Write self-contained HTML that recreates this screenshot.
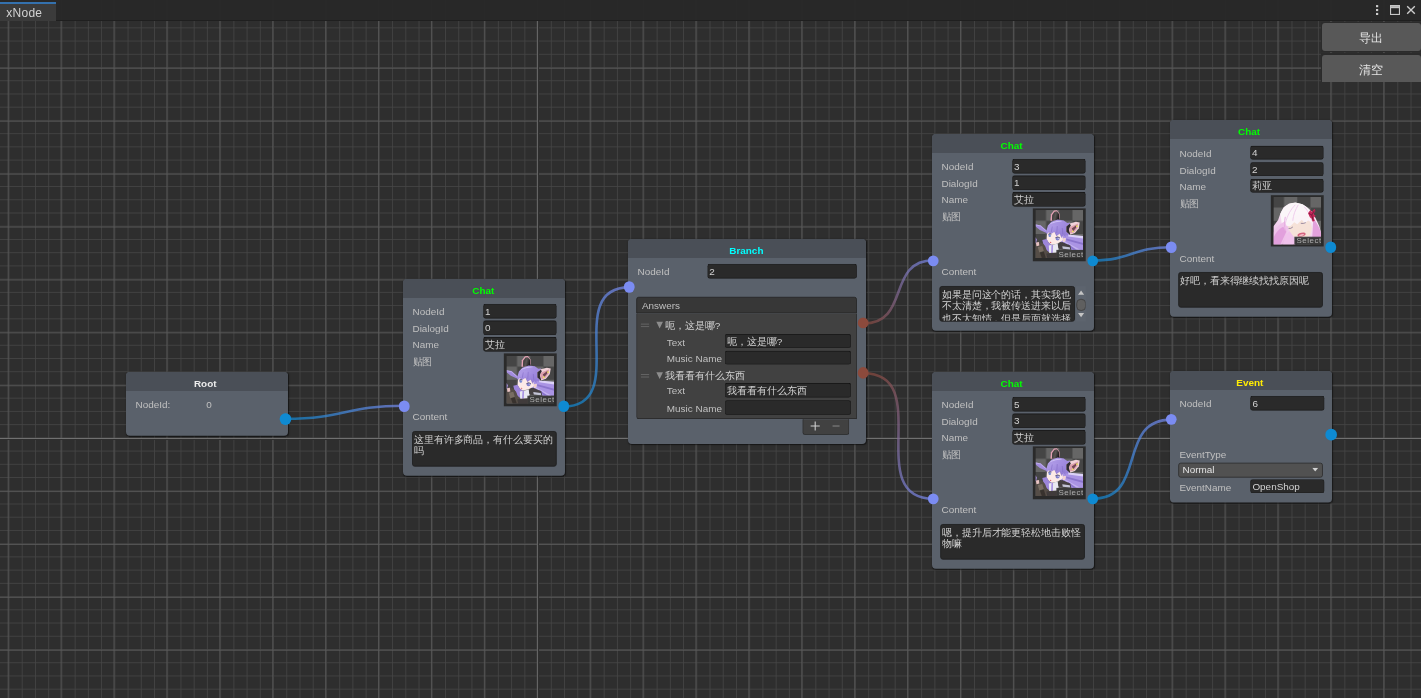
<!DOCTYPE html>
<html lang="zh"><head><meta charset="utf-8"><title>xNode</title>
<style>
html,body{margin:0;padding:0;background:#2e2e2e}
body{width:1421px;height:698px;overflow:hidden;position:relative;font-family:"Liberation Sans",sans-serif;font-size:12px;color:#c0c0c0}
#grid,#wires{position:absolute;left:0;top:0}
#top{position:absolute;left:0;top:0;width:1421px;height:21px;background:rgba(40,40,40,.99);will-change:transform}
#tab{position:absolute;left:0;top:2px;width:56px;height:19px;background:rgba(60,60,60,.99);border-top:2px solid #3471ae;box-sizing:border-box;color:#d2d2d2}
#tab span{position:absolute;left:6.3px;top:2px;line-height:14px;font-size:12px;letter-spacing:.25px}
.bpanel{position:absolute;left:1321px;width:100px;background:#2b2b2b}
.btn{position:absolute;left:1322px;width:98.5px;height:27.7px;background:#585858;border-radius:3px;color:#e4e4e4;text-align:center;line-height:30.5px;font-size:12px;will-change:transform}
.node{position:absolute;transform:scale(0.826446);transform-origin:0 0;background:#5a616b;border-radius:4.8px;box-shadow:1px 1px 1.5px rgba(0,0,0,.55);width:196px}
.hd{position:absolute;left:0;top:0;right:0;height:22.5px;background:#4a4f57;border-radius:4.8px 4.8px 0 0;text-align:center;font-weight:bold}
.hd span{display:block;position:relative;top:6.9px;line-height:14px;left:var(--tx,-1.5px)}
.lb,.tf{margin-top:var(--dy,0)}
.lb{position:absolute;left:11.5px;height:18px;line-height:21px;white-space:nowrap}
.tf{position:absolute;left:96.5px;width:89.5px;height:17.7px;box-sizing:border-box;background:#2a2a2a;border:1px solid #1d1d1d;border-top-color:#131313;border-radius:3px;color:#d2d2d2;line-height:17.5px;padding-left:1.7px;white-space:nowrap;overflow:hidden}
.ta{position:absolute;left:9.5px;width:175.3px;top:183.6px;height:43px;box-sizing:border-box;background:#2a2a2a;border:1px solid #1d1d1d;border-radius:3px;color:#d2d2d2;line-height:14.7px;padding:2.2px 0 0 1.6px;overflow:hidden;word-break:break-all}
.port{position:absolute;width:13.4px;height:13.4px;border-radius:50%;margin:-6.7px 0 0 -6.7px}
.pi{background:#7b8cf2;left:1.5px}
.po{background:#0e8ad2;left:194.3px}
.pr{background:#8c4a3c}
.th{position:absolute;left:122px;top:89.5px;width:64px;height:64px;background:#2a2a2a}
.th svg{position:absolute;left:3.3px;top:var(--io,3.3px)}
</style></head><body>
<svg id="grid" width="1421" height="698" viewBox="0 0 1421 698" fill="none">
<path d="M9.01 0V698M22.23 0V698M35.46 0V698M48.69 0V698M61.91 0V698M75.14 0V698M88.37 0V698M101.59 0V698M114.82 0V698M128.05 0V698M141.27 0V698M154.50 0V698M167.73 0V698M180.95 0V698M194.18 0V698M207.40 0V698M220.63 0V698M233.86 0V698M247.08 0V698M260.31 0V698M273.54 0V698M286.76 0V698M299.99 0V698M313.22 0V698M326.44 0V698M339.67 0V698M352.90 0V698M366.12 0V698M379.35 0V698M392.58 0V698M405.80 0V698M419.03 0V698M432.26 0V698M445.48 0V698M458.71 0V698M471.93 0V698M485.16 0V698M498.39 0V698M511.61 0V698M524.84 0V698M538.07 0V698M551.29 0V698M564.52 0V698M577.75 0V698M590.97 0V698M604.20 0V698M617.43 0V698M630.65 0V698M643.88 0V698M657.11 0V698M670.33 0V698M683.56 0V698M696.79 0V698M710.01 0V698M723.24 0V698M736.46 0V698M749.69 0V698M762.92 0V698M776.14 0V698M789.37 0V698M802.60 0V698M815.82 0V698M829.05 0V698M842.28 0V698M855.50 0V698M868.73 0V698M881.96 0V698M895.18 0V698M908.41 0V698M921.64 0V698M934.86 0V698M948.09 0V698M961.32 0V698M974.54 0V698M987.77 0V698M1000.99 0V698M1014.22 0V698M1027.45 0V698M1040.67 0V698M1053.90 0V698M1067.13 0V698M1080.35 0V698M1093.58 0V698M1106.81 0V698M1120.03 0V698M1133.26 0V698M1146.49 0V698M1159.71 0V698M1172.94 0V698M1186.17 0V698M1199.39 0V698M1212.62 0V698M1225.85 0V698M1239.07 0V698M1252.30 0V698M1265.52 0V698M1278.75 0V698M1291.98 0V698M1305.20 0V698M1318.43 0V698M1331.66 0V698M1344.88 0V698M1358.11 0V698M1371.34 0V698M1384.56 0V698M1397.79 0V698M1411.02 0V698M0 67.52H1421M0 54.29H1421M0 41.06H1421M0 27.84H1421M0 120.42H1421M0 107.20H1421M0 93.97H1421M0 80.74H1421M0 173.33H1421M0 160.10H1421M0 146.88H1421M0 133.65H1421M0 226.23H1421M0 213.01H1421M0 199.78H1421M0 186.56H1421M0 279.14H1421M0 265.91H1421M0 252.69H1421M0 239.46H1421M0 332.05H1421M0 318.82H1421M0 305.59H1421M0 292.37H1421M0 384.95H1421M0 371.73H1421M0 358.50H1421M0 345.27H1421M0 437.86H1421M0 424.63H1421M0 411.41H1421M0 398.18H1421M0 490.76H1421M0 477.54H1421M0 464.31H1421M0 451.09H1421M0 543.67H1421M0 530.44H1421M0 517.22H1421M0 503.99H1421M0 596.58H1421M0 583.35H1421M0 570.12H1421M0 556.90H1421M0 649.48H1421M0 636.26H1421M0 623.03H1421M0 609.80H1421M0 689.16H1421M0 675.94H1421M0 662.71H1421" stroke="#464646" stroke-width="0.827"/>
<path d="M8.18 0V698M61.09 0V698M113.99 0V698M166.90 0V698M219.80 0V698M272.71 0V698M325.62 0V698M378.52 0V698M431.43 0V698M484.33 0V698M537.24 0V698M590.15 0V698M643.05 0V698M695.96 0V698M748.86 0V698M801.77 0V698M854.68 0V698M907.58 0V698M960.49 0V698M1013.39 0V698M1066.30 0V698M1119.21 0V698M1172.11 0V698M1225.02 0V698M1277.92 0V698M1330.83 0V698M1383.74 0V698M0 68.34H1421M0 121.25H1421M0 174.16H1421M0 227.06H1421M0 279.97H1421M0 332.87H1421M0 385.78H1421M0 438.69H1421M0 491.59H1421M0 544.50H1421M0 597.40H1421M0 650.31H1421" stroke="#5b5b5b" stroke-width="0.827"/>
<path d="M0 439.5H1421M538.5 21V698" stroke="#2e2e2e" stroke-width="1" shape-rendering="crispEdges"/>
<path d="M0 438.5H1421" stroke="#707070" stroke-width="1" shape-rendering="crispEdges"/>
<path d="M537.5 21V698" stroke="#646464" stroke-width="1" shape-rendering="crispEdges"/>

</svg>
<div id="top"><div style="position:absolute;left:56px;top:20px;width:1365px;height:1px;background:#1f1f1f"></div><div id="tab"><span>xNode</span></div>
<svg style="position:absolute;left:1370px;top:0" width="51" height="21" viewBox="1370 0 51 21">
<g fill="#cdcdcd"><rect x="1376" y="5.1" width="2.2" height="2.1"/><rect x="1376" y="9" width="2.2" height="2.1"/><rect x="1376" y="12.9" width="2.2" height="2.1"/></g>
<rect x="1390.55" y="5.55" width="8.9" height="8.9" fill="none" stroke="#c8c8c8" stroke-width="1.1"/><rect x="1390" y="5" width="10" height="3.2" fill="#c8c8c8"/><rect x="1391" y="6" width="8" height="1" fill="#b4b4b4"/>
<path d="M1407.2 6.2L1414.8 13.8M1414.8 6.2L1407.2 13.8" stroke="#cdcdcd" stroke-width="1.35" fill="none"/>
</svg>
</div>
<div class="bpanel" style="top:22px;height:30.3px"></div>
<div class="bpanel" style="top:53.4px;height:28.8px"></div>
<div class="btn" style="top:23px">导出</div>
<div class="btn" style="top:55px;height:27px;border-radius:3px 3px 0 0">清空</div>

<svg width="0" height="0" style="position:absolute">
<defs>
<pattern id="chk" x="-2.48" y="-2.48" width="26.48" height="26.48" patternUnits="userSpaceOnUse"><rect width="26.48" height="26.48" fill="#454545"/><rect x="13.24" width="13.24" height="13.24" fill="#666"/><rect y="13.24" width="13.24" height="13.24" fill="#666"/></pattern>
<linearGradient id="lg" x1="0.6" y1="0" x2="0.1" y2="1"><stop offset="0" stop-color="#fbf4f8"/><stop offset=".45" stop-color="#f4dbf0"/><stop offset="1" stop-color="#ebb4e5"/></linearGradient>
<linearGradient id="eg" x1="0" y1="0" x2="1" y2="0.3"><stop offset="0" stop-color="#2f2c2e"/><stop offset=".55" stop-color="#5a5654"/><stop offset="1" stop-color="#1f1d1e"/></linearGradient>
<linearGradient id="hg" x1="0" y1="0" x2="1" y2="1"><stop offset="0" stop-color="#b6a3eb"/><stop offset=".5" stop-color="#a08ade"/><stop offset="1" stop-color="#8d76d0"/></linearGradient>
<filter id="bl" x="-5%" y="-5%" width="110%" height="110%"><feGaussianBlur stdDeviation="0.35"/></filter>
<symbol id="aila" viewBox="0 0 48 48">
<rect width="48" height="48" fill="url(#chk)"/>
<g filter="url(#bl)">
<path d="M0 14.4L5.3 15.2L11.5 20.6L10.7 22.7L4.5 20L0.6 16.7Z" fill="#a28bdd"/>
<path d="M0.6 14.9L5.2 16L10.4 20.6" stroke="#cbbcf3" stroke-width="0.7" fill="none"/>
<path d="M15.2 10.8L15.6 4.5L18.7 0.4L21.7 0.2L24.2 3.6L24.5 7.9L23.4 10.8Z" fill="#e6a3b6"/>
<path d="M16.6 10.8L16.9 5L19.2 1.7L21.6 1.3L23.8 4L24.2 10.8Z" fill="url(#eg)"/>
<path d="M10.9 21.5L12.6 15.6L16.1 11.8L22.5 9.6L28.5 10.5L32 13L34.9 12.6L33.6 15.2L34.4 20L34 28L29 34L12 25Z" fill="url(#hg)"/>
<path d="M14 14.5C17 11.5 22 10.2 27 11.2C22.5 11.6 18 12.6 14 14.5Z" fill="#d2c6f6"/>
<path d="M28 25L36 26L48 27.5V40H36.7L28.5 36.5L26.8 31.1Z" fill="#aa94e4"/>
<path d="M33 24.6L48 26V28.6L33 26.4Z" fill="#dcd2f8"/>
<path d="M31 28.5L48 33V35L31 30.2Z" fill="#8b74cd"/>
<path d="M30 31.5L45 39.8H42L29.5 33.5Z" fill="#c2b1ef"/>
<path d="M33 34L41 39.8H38L32 35.5Z" fill="#8b74cd"/>
<path d="M31.1 16.5L34.6 13.5L40.6 11.8L44.5 12.6L43.6 18.2L39.7 23L34.6 24.7L31.1 21.7Z" fill="#f0d2d8"/>
<path d="M31.1 16.5L34.4 13.8L35.6 15.2L33.6 19.5L35 24.4L34.6 24.7L31.1 21.7Z" fill="#2f2b30"/>
<path d="M34.6 17L42.9 13.4L42.4 17.8L39 22.2L35.2 23.4L34 20Z" fill="#dda0ac"/>
<path d="M36.5 18.6L41.4 15L40.8 17.8L38 21.2Z" fill="#6f4652"/>
<circle cx="41.8" cy="16.2" r="0.85" fill="#ecea55"/><circle cx="37.6" cy="21.3" r="0.85" fill="#ecea55"/>
<path d="M11.8 23L11.3 29.4L13.5 32.8L16.1 34.7L21.7 33.8L26.8 31.1L28.6 28.3L30.4 28L30 31.6L27.5 32L27.7 24.2L20 20.5Z" fill="#fceae7"/>
<path d="M27.9 28.3L30.3 28.1L29.9 31.6L27.8 31.8Z" fill="#f2d0cc"/>
<path d="M10.9 22.6C12 17.6 16.5 15 22 15.4C28 16 31 20.6 30.2 27.6L28.3 24.8L26.6 27.8L24.6 23.6L21.4 26L19.4 21.8L16 23.8L13.6 21.8L11.8 24.2Z" fill="url(#hg)"/>
<path d="M19.4 21.8L21.4 26M24.6 23.6L26.6 27.8M13.6 21.8L16 23.8M17 16.5L16 22M22 16L21.5 23M27 18L27.5 24" stroke="#8068c4" stroke-width="0.55" fill="none"/>
<ellipse cx="14.5" cy="25.4" rx="1.3" ry="1.65" fill="#7487d2"/><path d="M13 24.3Q14.5 23 16 24.2" stroke="#3b3558" stroke-width="0.75" fill="none"/><circle cx="14.9" cy="24.9" r="0.45" fill="#fff"/>
<ellipse cx="22.3" cy="28.7" rx="2" ry="1.7" fill="#8080cd"/><path d="M20.1 27.7Q22.4 26.1 24.6 27.8" stroke="#3b3558" stroke-width="0.75" fill="none"/><circle cx="22.9" cy="28.2" r="0.5" fill="#fff"/>
<ellipse cx="15.3" cy="32.4" rx="0.75" ry="0.55" fill="#d9636d"/>
<path d="M7 30L11.3 29L13.5 32.8L16.1 34.7L17.5 36L16 44L11 40L8 34Z" fill="#9c85da"/>
<path d="M13.5 35.6L22.8 33.6L24 38L21.5 43.5L14 43.5Z" fill="#e9e9f2"/>
<path d="M16.2 34.8L17.8 35L17.5 43L15.8 43Z" fill="#a892e2"/>
<path d="M22.5 34L27 32L35 35.5L36 39.8H28L23 38.5Z" fill="#454042"/>
<path d="M27 36.2L34.5 37.2L35 39.5L27.5 38.8Z" fill="#c3c4d6"/>
<path d="M0 33.5L3 31.5L7 33L9.8 36L11.5 40.5L14 43L22 42.5L22 48H0Z" fill="#554d47"/>
<path d="M0.6 32.4L3.6 32L4 35.6L1.2 36.2Z" fill="#e8c3c3"/>
<path d="M2.5 37L7 36L8.5 41L4 42.5Z" fill="#786d63"/>
<path d="M4.5 42.5L8.5 41.5L10.5 48H6.5Z" fill="#38332f"/>
<path d="M11 43.5L21 43L21 48H12Z" fill="#3f3a3a"/>
<path d="M0 27L1.6 29.5L0.8 33L0 33.5Z" fill="#a892e2"/>
</g>
<rect x="21.1" y="39.9" width="26.9" height="8.1" fill="#383838" opacity=".93"/>
<text x="23.3" y="46.7" font-size="8" letter-spacing="0.48" fill="#aeaeae" font-family="Liberation Sans, sans-serif">Select</text>
</symbol>
<symbol id="liya" viewBox="0 0 48 48">
<rect width="48" height="48" fill="url(#chk)"/>
<g filter="url(#bl)">
<path d="M0 29.8L4.8 23.1L7.1 16.7L10.3 10.3L15.8 6.6L22.2 5.7L29.5 7.5L34.1 10.7L38.7 14.9L42.4 21.3L46.1 29.5L48 36.9V41H22V48H0Z" fill="url(#lg)"/>
<path d="M7.1 17C10 9.5 16 6.2 22.2 5.9C30 6.5 37 11.5 40.5 19.5L42 27L36 23L24 22L14 28L9 31Z" fill="#fbf6f9"/>
<path d="M0 36C3 30 7 27 11 25L15 31L12 40L8 48H0Z" fill="#efc2ea"/>
<path d="M0 42C2 36 6 32 10 30L13 35L7 48H0Z" fill="#e2a0dd"/>
<path d="M10 48C11 41 14 36 17 34L21 40L20 48Z" fill="#f0c2ec"/>
<path d="M40 22C43 25 46 30 48 36.5V41H39Z" fill="#e3a2dc"/>
<path d="M13.9 27.7L21.3 23.1L31.4 22.2L36.9 25L38.7 31.4L36.9 38.7L33 41H21.3L16.7 35Z" fill="#f6e2d8"/>
<path d="M13 29C14 23 20 18.5 28 17.5C34 17.5 38 21 39.5 26L35 23.5L31.5 26.5L28.5 23L24 27.5L21 25.5L17 29.5Z" fill="#fbf4f8"/>
<path d="M22 8C18 12 14 18 12 27M25 8C22 13 20 18 19.5 24M31 10C34 13 37 18 38.5 24" stroke="#ecc3ea" stroke-width="0.8" fill="none"/>
<path d="M12 20C11 25 11 30 12 34" stroke="#e6aee2" stroke-width="1" fill="none"/>
<path d="M15.3 31.6Q17.6 32.2 19.6 30.1" stroke="#8a7a94" stroke-width="0.85" fill="none"/>
<path d="M27.5 26.5Q30.2 27.1 32.5 25.8" stroke="#8a7a94" stroke-width="0.85" fill="none"/>
<ellipse cx="28.3" cy="37.8" rx="4.2" ry="1.9" transform="rotate(-13 28.3 37.8)" fill="#d6647f"/>
<ellipse cx="28.3" cy="38.3" rx="2.6" ry="0.9" transform="rotate(-13 28.3 38.3)" fill="#f3bcc6"/>
<path d="M34.8 16.5L37.2 13L38.6 15.2L41.2 12L42.2 14.2L40.2 17.2L42.4 19L40.6 21L41.6 24L39.4 25L38.2 21.6L36.6 20.4Z" fill="#c7265a"/>
<path d="M35.6 16.6L38.6 18.2L39.8 23.6M38.6 18.2L41 14" stroke="#5e1a31" stroke-width="0.7" fill="none"/>
</g>
<rect x="21.1" y="39.9" width="26.9" height="8.1" fill="#383838" opacity=".93"/>
<text x="23.3" y="46.7" font-size="8" letter-spacing="0.48" fill="#aeaeae" font-family="Liberation Sans, sans-serif">Select</text>
</symbol>
</defs></svg>

<svg id="wires" width="1421" height="698" viewBox="0 0 1421 698">
<defs><linearGradient id="g0" gradientUnits="userSpaceOnUse" x1="285.5" y1="418.7" x2="404.5" y2="405.8"><stop offset="0" stop-color="#0e8ad2"/><stop offset="1" stop-color="#7b8cf2"/></linearGradient><linearGradient id="g1" gradientUnits="userSpaceOnUse" x1="563.7" y1="406.5" x2="629.3" y2="287.4"><stop offset="0" stop-color="#0e8ad2"/><stop offset="1" stop-color="#7b8cf2"/></linearGradient><linearGradient id="g2" gradientUnits="userSpaceOnUse" x1="863.5" y1="323.5" x2="933.4" y2="260.4"><stop offset="0" stop-color="#8c4a3c"/><stop offset="1" stop-color="#7b8cf2"/></linearGradient><linearGradient id="g3" gradientUnits="userSpaceOnUse" x1="863.5" y1="373.3" x2="933.4" y2="498.7"><stop offset="0" stop-color="#8c4a3c"/><stop offset="1" stop-color="#7b8cf2"/></linearGradient><linearGradient id="g4" gradientUnits="userSpaceOnUse" x1="1092.5" y1="260.4" x2="1171.5" y2="247.3"><stop offset="0" stop-color="#0e8ad2"/><stop offset="1" stop-color="#7b8cf2"/></linearGradient><linearGradient id="g5" gradientUnits="userSpaceOnUse" x1="1092.5" y1="498.7" x2="1171.5" y2="419.6"><stop offset="0" stop-color="#0e8ad2"/><stop offset="1" stop-color="#7b8cf2"/></linearGradient></defs>
<g fill="none" stroke-width="2.6" opacity="0.7" stroke-linecap="round"><path d="M285.5 418.7C345.3 418.7 344.7 405.8 404.5 405.8" stroke="url(#g0)"/>
<path d="M563.7 406.5C631.7 406.5 561.3 287.4 629.3 287.4" stroke="url(#g1)"/>
<path d="M863.5 323.5C910.6 323.5 886.3 260.4 933.4 260.4" stroke="url(#g2)"/>
<path d="M863.5 373.3C935.3 373.3 861.6 498.7 933.4 498.7" stroke="url(#g3)"/>
<path d="M1092.5 260.4C1132.5 260.4 1131.5 247.3 1171.5 247.3" stroke="url(#g4)"/>
<path d="M1092.5 498.7C1148.4 498.7 1115.6 419.6 1171.5 419.6" stroke="url(#g5)"/></g>
</svg>

<!-- Root -->
<div class="node" style="left:126.2px;top:372.4px;height:76.6px;--tx:-2.1px">
<div class="hd" style="color:#ececec"><span>Root</span></div>
<div class="lb" style="top:30px">NodeId:</div>
<div class="lb" style="top:30px;left:97px">0</div>
<div class="port po" style="top:56.8px;left:192.8px"></div>
</div>

<!-- Chat 1 -->
<div class="node" style="left:403.2px;top:279.3px;height:238px;--tx:-0.8px">
<div class="hd" style="color:#00ff00"><span>Chat</span></div>
<div class="lb" style="top:30px">NodeId</div><div class="tf" style="top:30px">1</div>
<div class="lb" style="top:50px">DialogId</div><div class="tf" style="top:50px">0</div>
<div class="lb" style="top:70px">Name</div><div class="tf" style="top:70px">艾拉</div>
<div class="lb" style="top:90px">贴图</div>
<div class="th"><svg width="58" height="58"><use href="#aila"/></svg></div>
<div class="port pi" style="top:153.8px"></div><div class="port po" style="top:153.8px"></div>
<div class="lb" style="top:157px">Content</div>
<div class="ta" style="left:10.6px">这里有许多商品，有什么要买的吗</div>
</div>

<!-- Branch -->
<div class="node" style="left:628.3px;top:238.9px;width:288px;height:247.5px;--tx:-0.8px">
<div class="hd" style="color:#00ffff"><span>Branch</span></div>
<div class="lb" style="top:30px">NodeId</div><div class="tf" style="top:30px;left:95.5px;width:181px">2</div>
<div class="port pi" style="top:58px"></div>
<div style="position:absolute;left:9.9px;top:69.7px;width:266.7px;height:20px;box-sizing:border-box;background:rgba(55,55,55,.99);border:1px solid #242424;border-radius:3px 3px 0 0"><span style="position:absolute;left:6px;top:1px;line-height:18px">Answers</span></div>
<div style="position:absolute;left:9.9px;top:89.7px;width:266.7px;height:127.9px;box-sizing:border-box;background:rgba(65,65,65,.99);border:1px solid #242424;border-top:none;border-radius:0 0 0 3px"></div>
<div style="position:absolute;left:211px;top:217.6px;width:57px;height:19.6px;box-sizing:border-box;background:rgba(65,65,65,.99);border:1px solid #242424;border-top:none;border-radius:0 0 3px 3px"></div>
<svg style="position:absolute;left:0;top:0" width="288" height="247" viewBox="0 0 288 247">
<g stroke="#6c6c6c" stroke-width="1"><path d="M15.6 103H25.6M15.6 106H25.6M15.6 164H25.6M15.6 167H25.6"/></g>
<path d="M34.3 100.2H42.3L38.3 108.2Z M34.3 161.3H42.3L38.3 169.3Z" fill="#8c8c8c"/>
<path d="M221 226.3H232M226.5 220.8V231.8" stroke="#d0d0d0" stroke-width="1.3"/>
<path d="M247.5 226.3H256" stroke="#8a8a8a" stroke-width="1.2"/>
</svg>
<div class="lb" style="top:95.2px;left:45px;color:#d2d2d2">呃，这是哪?</div>
<div class="lb" style="top:114.5px;left:47px">Text</div><div class="tf" style="top:114.5px;left:117.3px;width:153px">呃，这是哪?</div>
<div class="lb" style="top:134.5px;left:47px">Music Name</div><div class="tf" style="top:134.5px;left:117.3px;width:153px"></div>
<div class="lb" style="top:156.3px;left:45px;color:#d2d2d2">我看看有什么东西</div>
<div class="lb" style="top:174.2px;left:47px">Text</div><div class="tf" style="top:174.2px;left:117.3px;width:153px">我看看有什么东西</div>
<div class="lb" style="top:195px;left:47px">Music Name</div><div class="tf" style="top:195px;left:117.3px;width:153px"></div>
<div class="port pr" style="top:101.6px;left:284.6px"></div>
<div class="port pr" style="top:161.9px;left:284.6px"></div>
</div>

<!-- Chat 3 -->
<div class="node" style="left:932.3px;top:134.1px;height:237.5px;--tx:-1.8px;--io:2.2px">
<div class="hd" style="color:#00ff00"><span>Chat</span></div>
<div class="lb" style="top:30px">NodeId</div><div class="tf" style="top:30px">3</div>
<div class="lb" style="top:50px">DialogId</div><div class="tf" style="top:50px">1</div>
<div class="lb" style="top:70px">Name</div><div class="tf" style="top:70px">艾拉</div>
<div class="lb" style="top:90px">贴图</div>
<div class="th"><svg width="58" height="58"><use href="#aila"/></svg></div>
<div class="port pi" style="top:153.3px"></div><div class="port po" style="top:153.3px"></div>
<div class="lb" style="top:157px">Content</div>
<div class="ta" style="left:9.4px;width:163.6px">如果是问这个的话，其实我也不太清楚，我被传送进来以后也不太知情，但是后面就选择</div>
<div style="position:absolute;left:173.6px;top:183.6px;width:12.6px;height:43px;background:#5d646e"></div>
<svg style="position:absolute;left:173.6px;top:183.6px" width="12.6" height="43" viewBox="0 0 12.6 43"><path d="M2.7 10.4L6.4 5.4L10.1 10.4Z M2.7 32.6L6.4 37.6L10.1 32.6Z" fill="#c4c4c4"/><rect x="1.1" y="16.1" width="10.8" height="13.4" rx="4.8" fill="#5f5f5f" stroke="#3a3a3a" stroke-width="0.9"/></svg>
</div>

<!-- Chat 4 -->
<div class="node" style="left:1170.3px;top:120.2px;height:237.7px;--tx:-2.3px;--io:2.2px;--dy:.7px">
<div class="hd" style="color:#00ff00"><span>Chat</span></div>
<div class="lb" style="top:30px">NodeId</div><div class="tf" style="top:30px">4</div>
<div class="lb" style="top:50px">DialogId</div><div class="tf" style="top:50px">2</div>
<div class="lb" style="top:70px">Name</div><div class="tf" style="top:70px">莉亚</div>
<div class="lb" style="top:90px">贴图</div>
<div class="th" style="top:90.6px;height:62.9px"><svg width="58" height="58"><use href="#liya"/></svg></div>
<div class="port pi" style="top:153.8px"></div><div class="port po" style="top:153.8px"></div>
<div class="lb" style="top:157px">Content</div>
<div class="ta">好吧，看来得继续找找原因呢</div>
</div>

<!-- Chat 5 -->
<div class="node" style="left:932.3px;top:372.1px;height:238px;--tx:-1.8px;--io:2.2px">
<div class="hd" style="color:#00ff00"><span>Chat</span></div>
<div class="lb" style="top:30px">NodeId</div><div class="tf" style="top:30px">5</div>
<div class="lb" style="top:50px">DialogId</div><div class="tf" style="top:50px">3</div>
<div class="lb" style="top:70px">Name</div><div class="tf" style="top:70px">艾拉</div>
<div class="lb" style="top:90px">贴图</div>
<div class="th"><svg width="58" height="58"><use href="#aila"/></svg></div>
<div class="port pi" style="top:153.3px"></div><div class="port po" style="top:153.3px"></div>
<div class="lb" style="top:157px">Content</div>
<div class="ta">嗯，提升后才能更轻松地击败怪物嘛</div>
</div>

<!-- Event -->
<div class="node" style="left:1169.9px;top:371px;height:158.8px;--tx:-1.4px">
<div class="hd" style="color:#ffeb04"><span>Event</span></div>
<div class="lb" style="top:30px">NodeId</div><div class="tf" style="top:30px;left:97px">6</div>
<div class="port pi" style="top:58.2px"></div><div class="port po" style="top:77px;left:195px"></div>
<div class="lb" style="top:91px">EventType</div>
<div style="position:absolute;left:9.7px;top:111.3px;width:175.3px;height:17.5px;box-sizing:border-box;background:#515151;border:1px solid #2c2c2c;border-radius:3px;color:#e4e4e4;line-height:15.5px;padding-left:4.5px">Normal
<svg style="position:absolute;right:4.2px;top:5px" width="7.4" height="5" viewBox="0 0 7.4 5"><path d="M0 0H7.4L3.7 4.6Z" fill="#d2d2d2"/></svg></div>
<div class="lb" style="top:131px">EventName</div><div class="tf" style="top:130.8px;left:97px">OpenShop</div>
</div>
</body></html>
